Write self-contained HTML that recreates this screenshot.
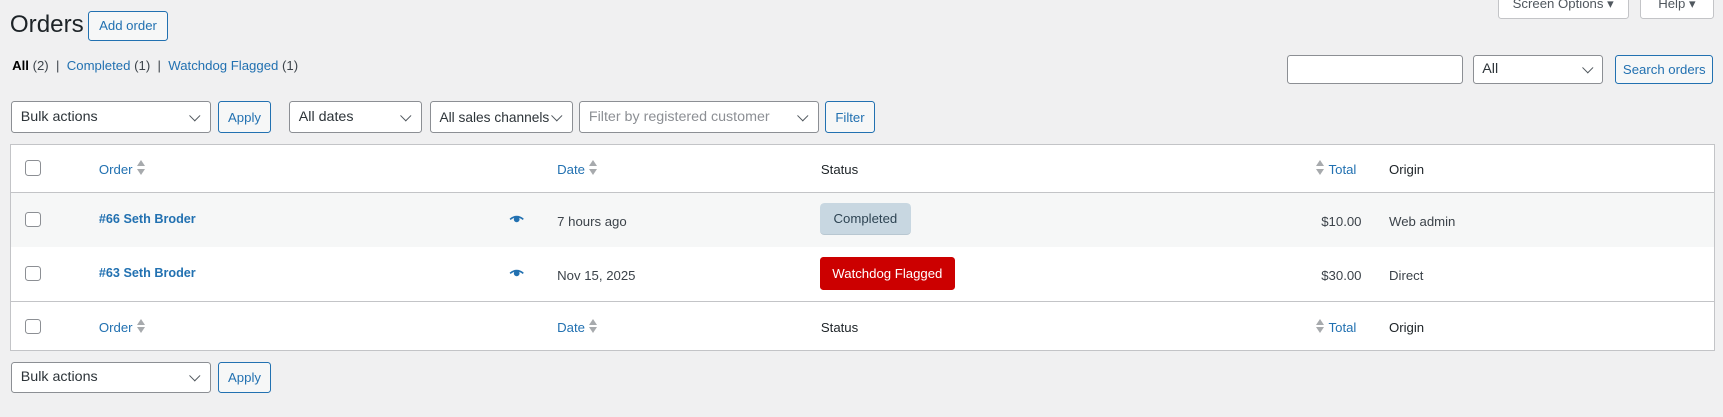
<!DOCTYPE html>
<html><head><meta charset="utf-8"><style>
html,body{margin:0;padding:0;background:#f0f0f1;width:1723px;height:417px;overflow:hidden}
#w{zoom:1.0989;position:relative;width:1568px;height:380px;font-family:"Liberation Sans",sans-serif;font-size:12px;color:#3c434a}
.a{position:absolute;box-sizing:border-box}
.btn{border:1px solid #2271b1;color:#2271b1;background:#f6f7f7;border-radius:3px;display:flex;align-items:center;justify-content:center;font-size:12px}
.sel{border:1px solid #8c8f94;background:#fff;border-radius:3px;display:flex;align-items:center;padding-left:8px;font-size:13px;color:#2c3338}
.sel:after{content:"";position:absolute;right:10px;top:50%;width:6px;height:6px;border-right:1.5px solid #50575e;border-bottom:1.5px solid #50575e;transform:translateY(-70%) rotate(45deg)}
.inp{border:1px solid #8c8f94;background:#fff;border-radius:3px}
.cb{width:14px;height:14px;border:1px solid #8c8f94;border-radius:3px;background:#fff}
a{color:#2271b1;text-decoration:none}
.srt{display:inline-block;width:8px;height:15px;position:relative;vertical-align:middle;margin-left:4px;margin-top:-3px}
.srt:before{content:"";position:absolute;left:0;top:0;border:4px solid transparent;border-bottom:6px solid #a7aaad;border-top:0}
.srt:after{content:"";position:absolute;left:0;top:8px;border:4px solid transparent;border-top:6px solid #a7aaad;border-bottom:0}
.t{position:absolute;line-height:1}
</style></head><body><div id="w">
<div class="t" style="left:9px;top:12px;font-size:22px;color:#1d2327">Orders</div>
<div class="a btn" style="left:80px;top:10px;width:73px;height:27px">Add order</div>
<div class="a btn" style="left:1363px;top:-10px;width:119px;height:27px;border-color:#c3c4c7;background:#fff;color:#50575e">Screen Options ▾</div>
<div class="a btn" style="left:1492px;top:-10px;width:68px;height:27px;border-color:#c3c4c7;background:#fff;color:#50575e">Help ▾</div>
<div class="t" style="left:11px;top:54px"><b style="color:#000;font-weight:600">All</b> (2)&nbsp; | &nbsp;<a>Completed</a> (1)&nbsp; | &nbsp;<a>Watchdog Flagged</a> (1)</div>
<div class="a inp" style="left:1171px;top:50px;width:160px;height:26px"></div>
<div class="a sel" style="left:1340px;top:50px;width:119px;height:26px">All</div>
<div class="a btn" style="left:1470px;top:50px;width:89px;height:26px">Search orders</div>
<div class="a sel" style="left:10px;top:92px;width:182px;height:29px">Bulk actions</div>
<div class="a btn" style="left:198px;top:92px;width:49px;height:29px">Apply</div>
<div class="a sel" style="left:263px;top:92px;width:121px;height:29px">All dates</div>
<div class="a sel" style="left:391px;top:92px;width:130px;height:29px;font-size:12.5px">All sales channels</div>
<div class="a sel" style="left:527px;top:92px;width:218px;height:29px;color:#8c8f94">Filter by registered customer</div>
<div class="a btn" style="left:751px;top:92px;width:45px;height:29px">Filter</div>
<div class="a" style="left:9px;top:131px;width:1552px;height:188px;background:#fff;border:1px solid #c3c4c7"></div>
<div class="a" style="left:10px;top:175px;width:1550px;height:1px;background:#c3c4c7"></div>
<div class="a" style="left:10px;top:176px;width:1550px;height:49px;background:#f6f7f7"></div>
<div class="a" style="left:10px;top:274px;width:1550px;height:1px;background:#c3c4c7"></div>
<div class="a cb" style="left:23px;top:146px"></div>
<div class="a cb" style="left:23px;top:193px"></div>
<div class="a cb" style="left:23px;top:242px"></div>
<div class="a cb" style="left:23px;top:290px"></div>
<div class="t" style="left:90px;top:148px"><a>Order</a><span class="srt"></span></div>
<div class="t" style="left:507px;top:148px"><a>Date</a><span class="srt"></span></div>
<div class="t" style="left:747px;top:148px;color:#1d2327">Status</div>
<div class="t" style="left:1198px;top:148px"><span class="srt" style="margin:-3px 3px 0 0"></span><a>Total</a></div>
<div class="t" style="left:1264px;top:148px;color:#1d2327">Origin</div>
<div class="t" style="left:90px;top:292px"><a>Order</a><span class="srt"></span></div>
<div class="t" style="left:507px;top:292px"><a>Date</a><span class="srt"></span></div>
<div class="t" style="left:747px;top:292px;color:#1d2327">Status</div>
<div class="t" style="left:1198px;top:292px"><span class="srt" style="margin:-3px 3px 0 0"></span><a>Total</a></div>
<div class="t" style="left:1264px;top:292px;color:#1d2327">Origin</div>
<div class="t" style="left:90px;top:194px;font-weight:bold;font-size:11.5px"><a>#66 Seth Broder</a></div>
<div class="t" style="left:90px;top:243px;font-weight:bold;font-size:11.5px"><a>#63 Seth Broder</a></div>
<svg class="a" style="left:463px;top:196px" width="14" height="8"><path d="M1 4Q7-1 13 4" stroke="#2271b1" stroke-width="1.5" fill="none"/><circle cx="7" cy="4" r="2.6" fill="#2271b1"/></svg>
<svg class="a" style="left:463px;top:245px" width="14" height="8"><path d="M1 4Q7-1 13 4" stroke="#2271b1" stroke-width="1.5" fill="none"/><circle cx="7" cy="4" r="2.6" fill="#2271b1"/></svg>
<div class="t" style="left:507px;top:196px">7 hours ago</div>
<div class="t" style="left:507px;top:245px">Nov 15, 2025</div>
<div class="a" style="left:746px;top:185px;width:83px;height:29px;background:#c8d7e1;color:#2e4453;border-radius:4px;display:flex;align-items:center;justify-content:center;border-bottom:1px solid #b8c7d1">Completed</div>
<div class="a" style="left:746px;top:234px;width:123px;height:30px;background:#cc0000;color:#fff;border-radius:3px;display:flex;align-items:center;justify-content:center">Watchdog Flagged</div>
<div class="t" style="left:1180px;top:196px;width:59px;text-align:right">$10.00</div>
<div class="t" style="left:1180px;top:245px;width:59px;text-align:right">$30.00</div>
<div class="t" style="left:1264px;top:196px">Web admin</div>
<div class="t" style="left:1264px;top:245px">Direct</div>
<div class="a sel" style="left:10px;top:329px;width:182px;height:29px">Bulk actions</div>
<div class="a btn" style="left:198px;top:329px;width:49px;height:29px">Apply</div>
</div></body></html>
